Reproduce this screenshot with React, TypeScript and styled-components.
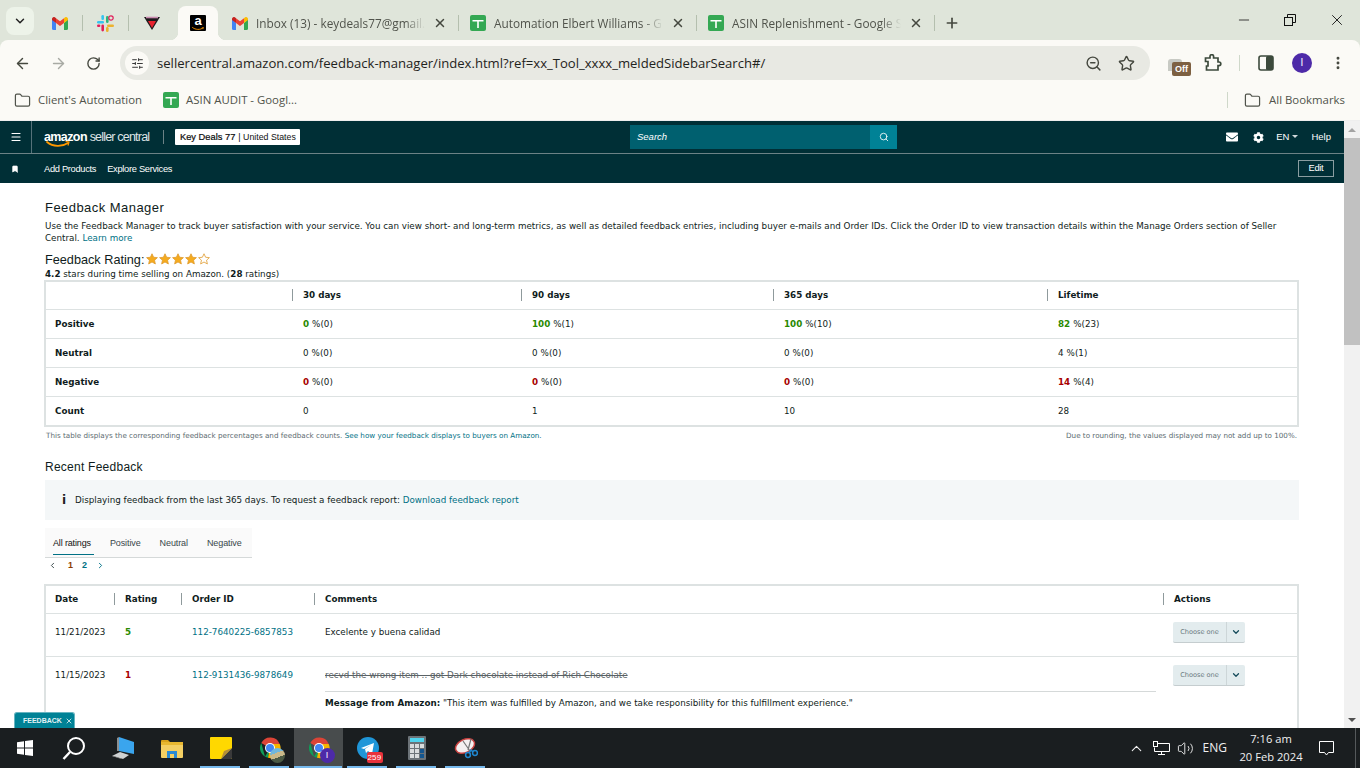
import React from 'react'
import styled, { createGlobalStyle } from 'styled-components'
import { FaCog, FaEnvelope } from 'react-icons/fa'
import {
  ArrowLeft,
  ArrowRight,
  RotateCw,
  ZoomOut,
  Star,
  MoreVertical,
  Folder,
  X,
  Plus,
  Minus,
  ChevronDown,
  ChevronLeft,
  ChevronRight,
  ChevronUp,
  Menu,
  Search,
  Bookmark,
  SlidersHorizontal,
  Volume2,
} from 'lucide-react'

const GlobalStyle = createGlobalStyle`
  html, body { margin: 0; padding: 0; overflow: hidden; background: #fff; }
  * { box-sizing: border-box; }
  body { font-family: "DejaVu Sans", Verdana, sans-serif; }
`

const UI = '"Liberation Sans", Arial, sans-serif'
const SEGOE = '"Open Sans", "Noto Sans", sans-serif'
const teal = '#007185'
const ink = '#0f1c20'
const line = '#dde2e2'
const strip = '#dfe5da'
const bar = '#fbfaf6'

/* ---------- browser icons ---------- */

const GmailIcon = () => (
  <svg width="16" height="13" viewBox="0 0 16 13">
    <path d="M0 2v9.5A1.5 1.5 0 0 0 1.5 13H4V6z" fill="#4285f4" />
    <path d="M16 2v9.5a1.5 1.5 0 0 1-1.5 1.5H12V6z" fill="#34a853" />
    <path d="M4 6V1.2L8 4.3l4-3.1V6L8 9z" fill="#ea4335" />
    <path d="M0 2c0-1.7 2-2.6 3.2-1.6L4 1.2V6L0 3z" fill="#c5221f" />
    <path d="M16 2c0-1.7-2-2.6-3.2-1.6l-.8.8V6l4-3z" fill="#fbbc04" />
  </svg>
)

const SlackIcon = () => (
  <svg width="17" height="17" viewBox="0 0 17 17">
    <rect x="0" y="6" width="7" height="2.6" rx="1.3" fill="#36c5f0" />
    <rect x="4.4" y="0" width="2.6" height="5" rx="1.3" fill="#36c5f0" />
    <rect x="9" y="1" width="2.6" height="7" rx="1.3" fill="#2eb67d" />
    <circle cx="14" cy="3" r="2.2" fill="none" stroke="#e01e5a" strokeWidth="1.2" />
    <rect x="10" y="9.4" width="7" height="2.6" rx="1.3" fill="#ecb22e" />
    <rect x="9" y="12" width="2.6" height="5" rx="1.3" fill="#ecb22e" />
    <rect x="4.4" y="9.4" width="2.6" height="7" rx="1.3" fill="#e01e5a" />
    <rect x="0" y="9.4" width="3.4" height="2.6" rx="1.3" fill="#e01e5a" />
  </svg>
)

const BadgeIcon = () => (
  <svg width="16" height="14" viewBox="0 0 16 14">
    <path d="M0 1h16L8 14z" fill="#1d1a1c" />
    <path d="M4 5h8L8 12z" fill="#e8222e" />
    <path d="M2 1.5h12" stroke="#c98bb0" strokeWidth="1.6" />
  </svg>
)

const SheetsIcon = () => (
  <svg width="16" height="16" viewBox="0 0 16 16">
    <rect width="16" height="16" rx="2" fill="#34a853" />
    <path d="M2.5 5h11v1.6H8.8V13H7.2V6.6H2.5z" fill="#fff" />
  </svg>
)

const AmazonFavicon = styled.span`
  position: relative;
  display: flex;
  justify-content: center;
  width: 16px;
  height: 16px;
  background: #000;
  border-radius: 1px;
  color: #fff;
  font: bold 13px/12px ${UI};
  svg {
    position: absolute;
    left: 2px;
    bottom: 1px;
  }
`

const Smile = ({ width, color = '#f90' }: { width: number; color?: string }) => (
  <svg width={width} height={width / 4} viewBox="0 0 24 6">
    <path d="M1 1c6 5 15 5 21 1" fill="none" stroke={color} strokeWidth="1.8" strokeLinecap="round" />
    <path d="M19.5 0.5l3.5 .5-1 3.5" fill="none" stroke={color} strokeWidth="1.2" />
  </svg>
)

const ChromeLogo = ({ size }: { size: number }) => (
  <svg width={size} height={size} viewBox="0 0 24 24">
    <path d="M12 12L3.3 7A10 10 0 0 1 21.7 8H12z" fill="#db4437" />
    <path d="M12 12L7 20.7 3.3 7A10 10 0 0 0 10 21.8z" fill="#0f9d58" />
    <path d="M12 8h9.7A10 10 0 0 1 10 21.8L12 12z" fill="#f4b400" />
    <circle cx="12" cy="12" r="5" fill="#fff" />
    <circle cx="12" cy="12" r="4" fill="#4285f4" />
  </svg>
)

/* ---------- browser chrome ---------- */

const Browser = styled.div`
  display: flex;
  flex-direction: column;
  width: 1360px;
  height: 768px;
  overflow: hidden;
  background: ${strip};
`

const TabStrip = styled.div`
  display: flex;
  align-items: center;
  height: 40px;
  padding: 6px 0 0 6px;
  flex: none;
`

const TabSearch = styled.div`
  display: flex;
  align-items: center;
  justify-content: center;
  width: 28px;
  height: 28px;
  margin: -4px 3px 0 0;
  border-radius: 8px;
  background: #edf3e9;
  color: #222;
`

const PinnedTab = styled.div`
  display: flex;
  align-items: center;
  justify-content: center;
  width: 45px;
  height: 34px;
`

const TabDivider = styled.span`
  flex: none;
  width: 1px;
  height: 16px;
  background: #b4bfae;
`

const ActiveTab = styled.div`
  position: relative;
  display: flex;
  align-items: center;
  justify-content: center;
  width: 40px;
  height: 34px;
  margin-left: 4px;
  background: ${bar};
  border-radius: 8px 8px 0 0;
  &::before,
  &::after {
    content: '';
    position: absolute;
    bottom: 0;
    width: 8px;
    height: 8px;
  }
  &::before {
    left: -8px;
    background: radial-gradient(circle at 0 0, transparent 8px, ${bar} 8.5px);
  }
  &::after {
    right: -8px;
    background: radial-gradient(circle at 100% 0, transparent 8px, ${bar} 8.5px);
  }
`

const Tab = styled.div<{ $lead?: boolean }>`
  display: flex;
  align-items: center;
  gap: 8px;
  width: ${p => (p.$lead ? '240px' : '237px')};
  height: 34px;
  padding: 0 11px 0 ${p => (p.$lead ? '14px' : '11px')};
  color: #50534b;
  font: 11.8px/16px ${SEGOE};
  svg.close {
    flex: none;
    color: #45483f;
  }
`

const TabTitle = styled.span`
  flex: 1;
  overflow: hidden;
  white-space: nowrap;
  -webkit-mask-image: linear-gradient(90deg, #000 88%, transparent);
  mask-image: linear-gradient(90deg, #000 88%, transparent);
`

const NewTab = styled.div`
  display: flex;
  margin-left: 9px;
  color: #45483f;
`

const WindowButtons = styled.div`
  display: flex;
  align-items: center;
  gap: 30px;
  margin-left: auto;
  margin-right: 14px;
  margin-top: -6px;
  color: #111;
`

const RestoreIcon = () => (
  <svg width="16" height="16" viewBox="0 0 16 16" fill="none" stroke="currentColor">
    <rect x="2.5" y="5.5" width="8" height="8" />
    <path d="M5.5 5.5v-3h8v8h-3" />
  </svg>
)

const Toolbar = styled.div`
  display: flex;
  align-items: center;
  height: 46px;
  padding: 0 0 0 14px;
  background: ${bar};
  border-radius: 8px 8px 0 0;
  flex: none;
`

const NavButton = styled.span<{ $dim?: boolean }>`
  display: flex;
  width: 36px;
  color: ${p => (p.$dim ? '#a8aaa4' : '#45483f')};
`

const Omnibox = styled.div`
  display: flex;
  align-items: center;
  width: 1030px;
  height: 34px;
  margin-left: -2px;
  padding: 0 15px 0 5px;
  background: #e8e9e3;
  border-radius: 17px;
  color: #1f2320;
  font: 13.1px/18px ${SEGOE};
`

const SiteChip = styled.span`
  display: flex;
  align-items: center;
  justify-content: center;
  width: 24px;
  height: 24px;
  margin-right: 8px;
  border-radius: 50%;
  background: ${bar};
  color: #333;
`

const OmniIcons = styled.span`
  display: flex;
  gap: 16px;
  margin-left: auto;
  color: #45483f;
`

const OffBadge = styled.span`
  position: relative;
  width: 24px;
  height: 20px;
  margin: 11px 0 0 18px;
  &::before {
    content: '';
    position: absolute;
    left: 0;
    top: 0;
    width: 14px;
    height: 12px;
    border-radius: 3px 3px 0 0;
    background: #c8cac4;
  }
`

const OffLabel = styled.span`
  position: absolute;
  left: 4px;
  top: 3px;
  width: 19px;
  height: 14px;
  border-radius: 2px;
  background: #7d6042;
  color: #fff;
  font: bold 9px/14px ${UI};
  text-align: center;
`

const ToolbarRight = styled.div`
  display: flex;
  align-items: center;
  margin-left: 12px;
  color: #45483f;
`

const ExtensionIcon = () => (
  <svg width="18" height="18" viewBox="0 0 18 18" fill="none" stroke="#3c4a3c" strokeWidth="1.7">
    <path d="M1.5 4H6V2.5a1.8 1.8 0 0 1 3.6 0V4H14v4h1a1.8 1.8 0 0 1 0 3.6h-1V16H2.5V12H4V7.5H1.5z" />
  </svg>
)

const ToolbarDivider = styled.span`
  width: 1px;
  height: 16px;
  margin: 0 18px 0 17px;
  background: #cfd8ca;
`

const SidePanelIcon = () => (
  <svg width="16" height="16" viewBox="0 0 16 16">
    <rect x="1" y="1" width="14" height="14" rx="2" fill="none" stroke="#3c4a3c" strokeWidth="1.6" />
    <rect x="8" y="1" width="7" height="14" rx="1.5" fill="#3c4a3c" />
  </svg>
)

const Avatar = styled.span`
  display: flex;
  align-items: center;
  justify-content: center;
  width: 20px;
  height: 20px;
  margin: 0 18px;
  border-radius: 50%;
  background: #4d2aa8;
  color: #fff;
  font: 10px/20px ${UI};
`

const BookmarkBar = styled.div`
  display: flex;
  align-items: center;
  height: 34px;
  padding: 0 15px 6px 14px;
  background: ${bar};
  color: #50534b;
  font: 11.4px/16px ${SEGOE};
  flex: none;
`

const BookmarkItem = styled.span`
  display: flex;
  align-items: center;
  gap: 7px;
  margin-right: 21px;
`

const BookmarkRight = styled.span`
  display: flex;
  align-items: center;
  margin-left: auto;
  gap: 8px;
  &::before {
    content: '';
    width: 1px;
    height: 16px;
    margin-right: 8px;
    background: #cfd8ca;
  }
`

/* ---------- page ---------- */

const Viewport = styled.div`
  position: relative;
  display: flex;
  flex: 1;
  min-height: 0;
  border-top: 1px solid #eee;
`

const Page = styled.div`
  flex: 1;
  min-width: 0;
  overflow: hidden;
  background: #fff;
`

const Scrollbar = styled.div`
  display: flex;
  flex-direction: column;
  align-items: center;
  width: 16px;
  background: #f1f1f1;
  color: #505050;
`

const ScrollArrow = styled.span<{ $down?: boolean }>`
  height: 17px;
  width: 16px;
  margin-top: ${p => (p.$down ? 'auto' : '0')};
  display: flex;
  align-items: center;
  justify-content: center;
  &::before {
    content: '';
    border-left: 4px solid transparent;
    border-right: 4px solid transparent;
    ${p => (p.$down ? 'border-top: 4px solid #505050;' : 'border-bottom: 4px solid #a3a3a3;')}
  }
`

const ScrollThumb = styled.span`
  width: 16px;
  height: 207px;
  background: #c1c1c1;
`

const TopNav = styled.div`
  position: relative;
  display: flex;
  align-items: center;
  height: 33px;
  background: #002f36;
  border-bottom: 1px solid #6c8286;
  color: #fff;
  font: 10px/12px ${UI};
`

const HamburgerCell = styled.span`
  display: flex;
  align-items: center;
  justify-content: center;
  width: 32px;
  height: 32px;
  border-right: 1px solid #56727a;
`

const Wordmark = styled.span`
  position: relative;
  width: 108px;
  margin-left: 12px;
  font: 12.5px/14px ${UI};
  letter-spacing: -0.8px;
  color: #dfe5e6;
  white-space: nowrap;
  b {
    color: #fff;
    letter-spacing: -0.6px;
  }
  svg {
    position: absolute;
    left: 2px;
    top: 11px;
  }
`

const NavSep = styled.span`
  width: 1px;
  height: 14px;
  margin: 0 11px;
  background: #6c8286;
`

const AccountChip = styled.span`
  display: flex;
  align-items: center;
  gap: 3px;
  height: 16px;
  padding: 0 4px 0 5px;
  background: #fff;
  color: #0f1111;
  border-radius: 1px;
  font: 8.8px/16px ${UI};
  b {
    font-weight: normal;
    font-size: 9.3px;
    -webkit-text-stroke: 0.2px #000;
  }
`

const SearchBox = styled.div`
  position: absolute;
  left: 630px;
  top: 4px;
  display: flex;
  align-items: center;
  width: 267px;
  height: 24px;
  background: #00606f;
  font: italic 9.5px/24px ${UI};
  padding-left: 7px;
`

const SearchButton = styled.span`
  display: flex;
  align-items: center;
  justify-content: center;
  width: 27px;
  height: 24px;
  margin-left: auto;
  background: #008296;
`

const NavRight = styled.div`
  display: flex;
  align-items: center;
  margin-left: auto;
  padding-right: 13px;
  font: 9.5px/12px ${UI};
`

const NavIcon = styled.span<{ $gap: number }>`
  display: flex;
  margin-right: ${p => p.$gap}px;
`

const Caret = styled.span`
  display: inline-block;
  margin: 0 13px 1px 3px;
  border-left: 3px solid transparent;
  border-right: 3px solid transparent;
  border-top: 3px solid #d0d8da;
`

const SubNav = styled.div`
  display: flex;
  align-items: center;
  height: 29px;
  padding-right: 10px;
  background: #002f36;
  color: #fff;
  font: 9.3px/12px ${UI};
  letter-spacing: -0.3px;
`

const SubIcon = styled.span`
  display: flex;
  width: 44px;
  padding-left: 11px;
`

const SubLink = styled.span`
  margin-right: 11px;
`

const EditButton = styled.span`
  width: 36px;
  height: 17px;
  margin-left: auto;
  border: 1px solid #8a9da1;
  text-align: center;
  line-height: 15px;
`

const Content = styled.div`
  padding: 17px 45px 0;
  color: ${ink};
  font-size: 8.75px;
  line-height: 12px;
`

const Title = styled.h1`
  margin: 0 0 4px;
  font: 13px/16px "Liberation Sans", sans-serif;
  letter-spacing: 0.45px;
  color: #0f1c20;
`

const Intro = styled.p`
  margin: 0 0 9px;
`

const Link = styled.span`
  color: ${teal};
`

const RatingHeading = styled.div`
  display: flex;
  align-items: center;
  gap: 2px;
  height: 15px;
  font: 12.7px/15px ${UI};
`

const Stars = styled.span`
  display: flex;
  gap: 1px;
  margin-top: -3px;
`

const RatingSummary = styled.div`
  height: 13px;
  line-height: 13px;
`

const SummaryTable = styled.div`
  display: grid;
  grid-template-columns: 246px 229px 252px 274px 1fr;
  margin: -1px 0 0 -1px;
  border: 2px solid ${line};
`

const HeadCell = styled.div<{ $sep?: boolean }>`
  position: relative;
  display: flex;
  align-items: center;
  height: 28px;
  padding-left: ${p => (p.$sep ? '11px' : '9px')};
  padding-bottom: 2px;
  border-bottom: 1px solid ${line};
  font-weight: bold;
  ${p =>
    p.$sep &&
    `&::before {
      content: '';
      position: absolute;
      left: 0;
      top: 7px;
      width: 1px;
      height: 12px;
      background: #8f9a9c;
    }`}
`

const Cell = styled.div<{ $last?: boolean; $first?: boolean }>`
  display: flex;
  align-items: center;
  height: ${p => (p.$last ? '28px' : '29px')};
  padding-left: ${p => (p.$first ? '9px' : '11px')};
  border-bottom: ${p => (p.$last ? '0' : `1px solid ${line}`)};
  font-weight: ${p => (p.$first ? 'bold' : 'normal')};
`

const Score = styled.b<{ $tone: 'good' | 'bad' | 'plain' }>`
  margin-right: 3px;
  font-weight: ${p => (p.$tone === 'plain' ? 'normal' : 'bold')};
  color: ${p => (p.$tone === 'good' ? '#2a8a00' : p.$tone === 'bad' ? '#a80000' : 'inherit')};
`

const FootNote = styled.div`
  display: flex;
  justify-content: space-between;
  padding: 0 2px 0 1px;
  margin-top: 4px;
  color: #5b6b70;
  font-size: 7.2px;
  line-height: 10px;
`

const SectionTitle = styled.h2`
  margin: 18px 0 5px;
  font: 12px/16px ${UI};
  letter-spacing: 0.25px;
`

const Notice = styled.div`
  display: flex;
  align-items: center;
  height: 40px;
  padding-left: 17px;
  background: #f4f7f8;
  gap: 7px;
`

const InfoGlyph = styled.span`
  width: 6px;
  font: bold 12px/12px "DejaVu Sans", sans-serif;
  color: #222;
`

const TabsBar = styled.div`
  display: flex;
  align-items: center;
  width: 207px;
  height: 30px;
  margin-top: 8px;
  padding-left: 8px;
  gap: 19px;
  background: #fafafa;
  border-bottom: 1px solid #d5d9d9;
  font: 9px/12px ${UI};
  letter-spacing: -0.1px;
  color: #39474b;
`

const RatingTab = styled.span<{ $active?: boolean }>`
  position: relative;
  color: ${p => (p.$active ? '#0f1111' : 'inherit')};
  letter-spacing: ${p => (p.$active ? '-0.15px' : 'inherit')};
  ${p =>
    p.$active &&
    `&::after {
      content: '';
      position: absolute;
      left: 0;
      right: -3px;
      bottom: -6px;
      height: 1px;
      background: ${teal};
    }`}
`

const Pager = styled.div`
  display: flex;
  align-items: center;
  gap: 9px;
  height: 14px;
  padding-left: 3px;
  font: bold 9px/14px ${UI};
  color: ${teal};
`

const PagerCurrent = styled.span`
  color: #8c3b00;
  margin-left: 2px;
`

const FeedbackTable = styled.div`
  margin: 12px 0 0 -1px;
  border: 2px solid ${line};
  border-bottom: 0;
  display: grid;
  grid-template-columns: 68px 67px 133px 849px 1fr;
`

const RowCell = styled.div<{ $tall?: boolean }>`
  height: ${p => (p.$tall ? '90px' : '43px')};
  padding: 12px 0 0 11px;
  border-bottom: 1px solid ${line};
`

const DateCell = styled(RowCell)`
  padding-left: 9px;
`

const Struck = styled.div`
  height: 23px;
  border-bottom: 1px solid #d5d9d9;
  margin-right: 7px;
  color: #5b6366;
  text-decoration: line-through;
`

const AmazonMessage = styled.div`
  margin-top: 5px;
`

const Dropdown = styled.div`
  display: flex;
  align-items: center;
  width: 72px;
  height: 21px;
  margin: -4px 0 0 -1px;
  background: #e3ecee;
  border-radius: 2px;
  border-bottom: 1px solid #c5cdcf;
  color: #6a7b80;
  font-size: 6.6px;
`

const DropdownLabel = styled.span`
  display: block;
  width: 54px;
  height: 100%;
  line-height: 20px;
  text-align: center;
  border-right: 1px solid #cdd6d8;
`

const DropdownCaret = styled.span`
  display: flex;
  flex: 1;
  justify-content: center;
  color: #164c5b;
`

const FeedbackTag = styled.div`
  position: absolute;
  left: 14px;
  bottom: 0;
  display: flex;
  align-items: center;
  gap: 3px;
  width: 61px;
  height: 16px;
  padding-left: 8px;
  background: #008296;
  border-radius: 3px 3px 0 0;
  border: 1px solid #67b4c0;
  border-bottom: 0;
  color: #e4f3f5;
  font: bold 7px/14px ${UI};
`

/* ---------- taskbar ---------- */

const Taskbar = styled.div`
  display: flex;
  align-items: stretch;
  height: 40px;
  background: #1a1e20;
  color: #fff;
  flex: none;
`

const TaskItem = styled.div<{ $active?: boolean; $open?: boolean }>`
  position: relative;
  display: flex;
  align-items: center;
  justify-content: center;
  width: 49px;
  background: ${p => (p.$active ? '#484c4d' : 'transparent')};
  ${p =>
    p.$open &&
    `&::after {
      content: '';
      position: absolute;
      bottom: 0;
      left: ${p.$active ? '0' : '4px'};
      right: ${p.$active ? '1px' : '5px'};
      height: 2px;
      background: #76b9ed;
    }`}
`

const ChromeStack = styled.span`
  position: relative;
  display: flex;
`

const ProfileDot = styled.span`
  position: absolute;
  right: -4px;
  bottom: -3px;
  width: 15px;
  height: 15px;
  border-radius: 50%;
  background: #4d2aa8;
  color: #fff;
  font: 9px/15px ${UI};
  text-align: center;
`

const ProfilePhoto = styled.span`
  position: absolute;
  right: -3px;
  bottom: -3px;
  width: 15px;
  height: 15px;
  border-radius: 50%;
  background: linear-gradient(160deg, #6fb7dc 0 35%, #c9b98a 35% 60%, #4b5a44 60%);
`

const CountBadge = styled.span`
  position: absolute;
  right: -4px;
  bottom: -4px;
  width: 16px;
  height: 11px;
  background: #e8323c;
  border-radius: 2px;
  color: #fff;
  font: 8px/11px ${UI};
  letter-spacing: 0.3px;
  text-align: center;
`

const Tray = styled.div`
  display: flex;
  align-items: center;
  margin-left: auto;
  padding-right: 4px;
  font: 12px/16px ${SEGOE};
  color: #f0f0f0;
  &::after {
    content: '';
    width: 1px;
    height: 40px;
    margin-left: 20px;
    background: #55595b;
  }
`

const TrayIcons = styled.span`
  display: flex;
  align-items: center;
  gap: 7px;
  margin-right: 9px;
`

const Clock = styled.span`
  display: flex;
  flex-direction: column;
  align-items: center;
  width: 62px;
  margin: 0 16px 0 13px;
  font-size: 11.2px;
  line-height: 18px;
  white-space: nowrap;
`

const WindowsLogo = () => (
  <svg width="16" height="16" viewBox="0 0 16 16" fill="#fff">
    <path d="M0 2.3l7-1v6.3H0zM8 1.1L16 0v7.6H8zM0 8.5h7v6.2l-7-1zM8 8.5h8V16l-8-1.1z" />
  </svg>
)

const SearchGlass = () => (
  <svg width="24" height="24" viewBox="0 0 24 24" fill="none" stroke="#fff" strokeWidth="2">
    <circle cx="14" cy="10" r="8" />
    <path d="M8 16l-6.5 7" strokeWidth="2.4" />
  </svg>
)

const ComputerIcon = () => (
  <svg width="24" height="24" viewBox="0 0 24 24">
    <path d="M8 1l15 5v12L8 15z" fill="#3aa5ee" />
    <path d="M8 1l-2 1v13l2 0z" fill="#8c8f90" />
    <path d="M1 20l8-4 9 3-6 4z" fill="#cfd2d3" />
    <path d="M1 20l2 0 9 3h-2z" fill="#777" />
  </svg>
)

const ExplorerIcon = () => (
  <svg width="22" height="19" viewBox="0 0 22 19">
    <path d="M0 2a1 1 0 0 1 1-1h6l2 2H0z" fill="#d9a21b" />
    <rect y="3" width="22" height="16" rx="1" fill="#f4cf63" />
    <rect y="3" width="22" height="3" fill="#e8b730" />
    <path d="M6 12h10v7h-3v-4H9v4H6z" fill="#2a8ad4" />
  </svg>
)

const StickyIcon = () => (
  <svg width="22" height="22" viewBox="0 0 22 22">
    <rect width="22" height="22" rx="1" fill="#ffd800" />
    <path d="M11 22l11-11v10a1 1 0 0 1-1 1z" fill="#3a3a3a" />
    <path d="M11 22l3-8 8-3z" fill="#b48f3a" />
  </svg>
)

const TelegramIcon = () => (
  <svg width="22" height="22" viewBox="0 0 22 22">
    <circle cx="11" cy="11" r="11" fill="#1f96d8" />
    <path d="M4 11l13-5-2 11-4-3-2 2-1-4 6-4-7 4z" fill="#fff" />
  </svg>
)

const CalculatorIcon = () => (
  <svg width="18" height="24" viewBox="0 0 18 24">
    <rect width="18" height="24" rx="1" fill="#6c7378" />
    <rect x="2" y="2" width="14" height="4" fill="#50d4ee" />
    {[0, 1, 2].map(r =>
      [0, 1, 2].map(c => (
        <rect
          key={`${r}-${c}`}
          x={2 + c * 5}
          y={8 + r * 5}
          width="4"
          height="4"
          fill={c === 2 && r > 0 ? '#14568f' : '#d9dcdd'}
        />
      )),
    )}
  </svg>
)

const SnipIcon = () => (
  <svg width="24" height="22" viewBox="0 0 24 22">
    <ellipse cx="11" cy="9" rx="10" ry="6.5" transform="rotate(-25 11 9)" fill="#f4f0f0" stroke="#c8413f" strokeWidth="1.5" />
    <path d="M9 4l7 10M17 2l-3 11" stroke="#777" strokeWidth="1.2" />
    <circle cx="14" cy="18" r="2.4" fill="none" stroke="#1f87d0" strokeWidth="1.5" />
    <circle cx="21" cy="16" r="2.4" fill="none" stroke="#1f87d0" strokeWidth="1.5" />
    <path d="M15 16l2-3 2 2" stroke="#1f87d0" strokeWidth="1.5" fill="none" />
  </svg>
)

const NetworkIcon = () => (
  <svg width="18" height="16" viewBox="0 0 18 16" fill="none" stroke="#fff">
    <path d="M5.5 3.5h12v8h-15v-4" />
    <rect x="1.5" y="1.5" width="4" height="5" />
    <path d="M9.5 11.5v3M6 14.5h7" />
  </svg>
)

const ActionCenterIcon = () => (
  <svg width="17" height="17" viewBox="0 0 17 17" fill="none" stroke="#fff">
    <path d="M1.5 1.5h14v11h-5l-2 2.5-2-2.5h-5z" />
  </svg>
)

/* ---------- data ---------- */

type Stat = { score: string; tone: 'good' | 'bad' | 'plain'; count: string }

const summaryRows: { label: string; stats: Stat[] }[] = [
  {
    label: 'Positive',
    stats: [
      { score: '0', tone: 'good', count: '(0)' },
      { score: '100', tone: 'good', count: '(1)' },
      { score: '100', tone: 'good', count: '(10)' },
      { score: '82', tone: 'good', count: '(23)' },
    ],
  },
  {
    label: 'Neutral',
    stats: [
      { score: '0', tone: 'plain', count: '(0)' },
      { score: '0', tone: 'plain', count: '(0)' },
      { score: '0', tone: 'plain', count: '(0)' },
      { score: '4', tone: 'plain', count: '(1)' },
    ],
  },
  {
    label: 'Negative',
    stats: [
      { score: '0', tone: 'bad', count: '(0)' },
      { score: '0', tone: 'bad', count: '(0)' },
      { score: '0', tone: 'bad', count: '(0)' },
      { score: '14', tone: 'bad', count: '(4)' },
    ],
  },
]

const RatingStar = ({ filled }: { filled: boolean }) => (
  <svg width="12" height="12" viewBox="0 0 24 24">
    <path
      d="M12 1.5l3.2 7 7.6.8-5.7 5.1 1.6 7.5-6.7-3.9-6.7 3.9 1.6-7.5L1.2 9.3l7.6-.8z"
      fill={filled ? '#f5ab1e' : '#fff'}
      stroke="#de9a2e"
      strokeWidth="1.6"
    />
  </svg>
)

const ChooseOne = () => (
  <Dropdown>
    <DropdownLabel>Choose one</DropdownLabel>
    <DropdownCaret>
      <ChevronDown size={10} strokeWidth={3} />
    </DropdownCaret>
  </Dropdown>
)

const App: React.FC = () => {
  return (
    <Browser>
      <GlobalStyle />
      <TabStrip>
        <TabSearch>
          <ChevronDown size={14} strokeWidth={2.5} />
        </TabSearch>
        <PinnedTab>
          <GmailIcon />
        </PinnedTab>
        <TabDivider />
        <PinnedTab>
          <SlackIcon />
        </PinnedTab>
        <TabDivider />
        <PinnedTab>
          <BadgeIcon />
        </PinnedTab>
        <ActiveTab>
          <AmazonFavicon>
            a
            <Smile width={12} />
          </AmazonFavicon>
        </ActiveTab>
        <Tab $lead>
          <GmailIcon />
          <TabTitle>Inbox (13) - keydeals77@gmail.</TabTitle>
          <X className="close" size={14} strokeWidth={2.5} />
        </Tab>
        <TabDivider />
        <Tab>
          <SheetsIcon />
          <TabTitle>Automation Elbert Williams - G</TabTitle>
          <X className="close" size={14} strokeWidth={2.5} />
        </Tab>
        <TabDivider />
        <Tab>
          <SheetsIcon />
          <TabTitle>ASIN Replenishment - Google S</TabTitle>
          <X className="close" size={14} strokeWidth={2.5} />
        </Tab>
        <TabDivider />
        <NewTab>
          <Plus size={16} strokeWidth={2.5} />
        </NewTab>
        <WindowButtons>
          <Minus size={16} strokeWidth={1.2} />
          <RestoreIcon />
          <X size={18} strokeWidth={1.2} />
        </WindowButtons>
      </TabStrip>

      <Toolbar>
        <NavButton>
          <ArrowLeft size={17} strokeWidth={2} />
        </NavButton>
        <NavButton $dim>
          <ArrowRight size={17} strokeWidth={2} />
        </NavButton>
        <NavButton>
          <RotateCw size={15} strokeWidth={2.2} />
        </NavButton>
        <Omnibox>
          <SiteChip>
            <SlidersHorizontal size={13} strokeWidth={1.8} />
          </SiteChip>
          sellercentral.amazon.com/feedback-manager/index.html?ref=xx_Tool_xxxx_meldedSidebarSearch#/
          <OmniIcons>
            <ZoomOut size={17} strokeWidth={2} />
            <Star size={17} strokeWidth={2} />
          </OmniIcons>
        </Omnibox>
        <OffBadge>
          <OffLabel>Off</OffLabel>
        </OffBadge>
        <ToolbarRight>
          <ExtensionIcon />
          <ToolbarDivider />
          <SidePanelIcon />
          <Avatar>I</Avatar>
          <MoreVertical size={16} strokeWidth={2.4} />
        </ToolbarRight>
      </Toolbar>

      <BookmarkBar>
        <BookmarkItem>
          <Folder size={17} strokeWidth={1.7} />
          Client's Automation
        </BookmarkItem>
        <BookmarkItem>
          <SheetsIcon />
          ASIN AUDIT - Googl...
        </BookmarkItem>
        <BookmarkRight>
          <Folder size={17} strokeWidth={1.7} />
          All Bookmarks
        </BookmarkRight>
      </BookmarkBar>

      <Viewport>
        <Page>
          <TopNav>
            <HamburgerCell>
              <Menu size={12} strokeWidth={2.2} />
            </HamburgerCell>
            <Wordmark>
              <b>amazon</b> seller central
              <Smile width={24} />
            </Wordmark>
            <NavSep />
            <AccountChip>
              <b>Key Deals 77</b> | United States
            </AccountChip>
            <SearchBox>
              Search
              <SearchButton>
                <Search size={10} strokeWidth={2} />
              </SearchButton>
            </SearchBox>
            <NavRight>
              <NavIcon $gap={15}>
                <FaEnvelope size={12} />
              </NavIcon>
              <NavIcon $gap={12}>
                <FaCog size={11} />
              </NavIcon>
              EN
              <Caret />
              Help
            </NavRight>
          </TopNav>
          <SubNav>
            <SubIcon>
              <Bookmark size={8} fill="#fff" stroke="#fff" />
            </SubIcon>
            <SubLink>Add Products</SubLink>
            <SubLink>Explore Services</SubLink>
            <EditButton>Edit</EditButton>
          </SubNav>

          <Content>
            <Title>Feedback Manager</Title>
            <Intro>
              Use the Feedback Manager to track buyer satisfaction with your service. You can view short- and long-term
              metrics, as well as detailed feedback entries, including buyer e-mails and Order IDs. Click the Order ID to
              view transaction details within the Manage Orders section of Seller Central. <Link>Learn more</Link>
            </Intro>
            <RatingHeading>
              Feedback Rating:
              <Stars>
                {[true, true, true, true, false].map((filled, i) => (
                  <RatingStar key={i} filled={filled} />
                ))}
              </Stars>
            </RatingHeading>
            <RatingSummary>
              <b>4.2</b> stars during time selling on Amazon. (<b>28</b> ratings)
            </RatingSummary>

            <SummaryTable>
              <HeadCell />
              <HeadCell $sep>30 days</HeadCell>
              <HeadCell $sep>90 days</HeadCell>
              <HeadCell $sep>365 days</HeadCell>
              <HeadCell $sep>Lifetime</HeadCell>
              {summaryRows.map(row => (
                <React.Fragment key={row.label}>
                  <Cell $first>{row.label}</Cell>
                  {row.stats.map((s, i) => (
                    <Cell key={i}>
                      <Score $tone={s.tone}>{s.score}</Score>%{s.count}
                    </Cell>
                  ))}
                </React.Fragment>
              ))}
              <Cell $first $last>
                Count
              </Cell>
              <Cell $last>0</Cell>
              <Cell $last>1</Cell>
              <Cell $last>10</Cell>
              <Cell $last>28</Cell>
            </SummaryTable>
            <FootNote>
              <span>
                This table displays the corresponding feedback percentages and feedback counts.{' '}
                <Link>See how your feedback displays to buyers on Amazon.</Link>
              </span>
              <span>Due to rounding, the values displayed may not add up to 100%.</span>
            </FootNote>

            <SectionTitle>Recent Feedback</SectionTitle>
            <Notice>
              <InfoGlyph>i</InfoGlyph>
              <span>
                Displaying feedback from the last 365 days. To request a feedback report:{' '}
                <Link>Download feedback report</Link>
              </span>
            </Notice>

            <TabsBar>
              <RatingTab $active>All ratings</RatingTab>
              <RatingTab>Positive</RatingTab>
              <RatingTab>Neutral</RatingTab>
              <RatingTab>Negative</RatingTab>
            </TabsBar>
            <Pager>
              <ChevronLeft size={9} color="#39474b" strokeWidth={2.5} />
              <PagerCurrent>1</PagerCurrent>
              <span>2</span>
              <ChevronRight size={9} strokeWidth={2.5} />
            </Pager>

            <FeedbackTable>
              <HeadCell>Date</HeadCell>
              <HeadCell $sep>Rating</HeadCell>
              <HeadCell $sep>Order ID</HeadCell>
              <HeadCell $sep>Comments</HeadCell>
              <HeadCell $sep>Actions</HeadCell>

              <DateCell>11/21/2023</DateCell>
              <RowCell>
                <Score $tone="good">5</Score>
              </RowCell>
              <RowCell>
                <Link>112-7640225-6857853</Link>
              </RowCell>
              <RowCell>Excelente y buena calidad</RowCell>
              <RowCell>
                <ChooseOne />
              </RowCell>

              <DateCell $tall>11/15/2023</DateCell>
              <RowCell $tall>
                <Score $tone="bad">1</Score>
              </RowCell>
              <RowCell $tall>
                <Link>112-9131436-9878649</Link>
              </RowCell>
              <RowCell $tall>
                <Struck>recvd the wrong item .. got Dark chocolate instead of Rich Chocolate</Struck>
                <AmazonMessage>
                  <b>Message from Amazon:</b> "This item was fulfilled by Amazon, and we take responsibility for this
                  fulfillment experience."
                </AmazonMessage>
              </RowCell>
              <RowCell $tall>
                <ChooseOne />
              </RowCell>
            </FeedbackTable>
          </Content>
        </Page>
        <Scrollbar>
          <ScrollArrow />
          <ScrollThumb />
          <ScrollArrow $down />
        </Scrollbar>
        <FeedbackTag>
          FEEDBACK <X size={8} strokeWidth={2.5} />
        </FeedbackTag>
      </Viewport>

      <Taskbar>
        <TaskItem>
          <WindowsLogo />
        </TaskItem>
        <TaskItem>
          <SearchGlass />
        </TaskItem>
        <TaskItem>
          <ComputerIcon />
        </TaskItem>
        <TaskItem>
          <ExplorerIcon />
        </TaskItem>
        <TaskItem $open>
          <StickyIcon />
        </TaskItem>
        <TaskItem $open>
          <ChromeStack>
            <ChromeLogo size={24} />
            <ProfilePhoto />
          </ChromeStack>
        </TaskItem>
        <TaskItem $open $active>
          <ChromeStack>
            <ChromeLogo size={24} />
            <ProfileDot>I</ProfileDot>
          </ChromeStack>
        </TaskItem>
        <TaskItem $open>
          <ChromeStack>
            <TelegramIcon />
            <CountBadge>259</CountBadge>
          </ChromeStack>
        </TaskItem>
        <TaskItem $open>
          <CalculatorIcon />
        </TaskItem>
        <TaskItem $open>
          <SnipIcon />
        </TaskItem>
        <Tray>
          <TrayIcons>
            <ChevronUp size={17} strokeWidth={1.5} />
            <NetworkIcon />
            <Volume2 size={17} strokeWidth={1.3} />
          </TrayIcons>
          ENG
          <Clock>
            <span>7:16 am</span>
            <span>20 Feb 2024</span>
          </Clock>
          <ActionCenterIcon />
        </Tray>
      </Taskbar>
    </Browser>
  )
}

export default App
